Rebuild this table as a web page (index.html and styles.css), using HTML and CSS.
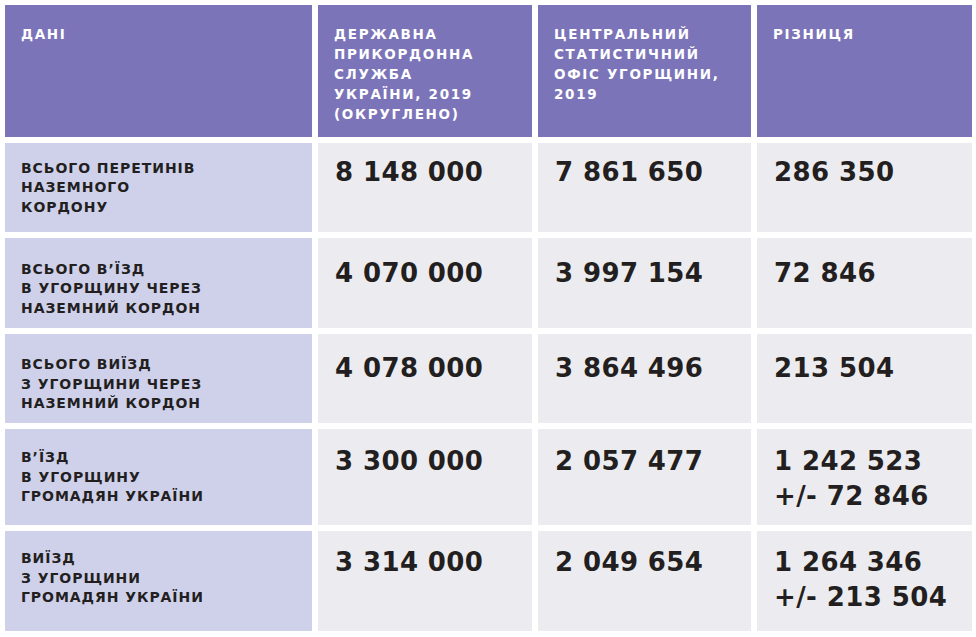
FILE: index.html
```html
<!DOCTYPE html>
<html lang="uk">
<head>
<meta charset="utf-8">
<title>Перетини кордону</title>
<link rel="stylesheet" href="styles.css">
</head>
<body>
<div class="table">
  <div class="row row-head">
    <div class="cell head">ДАНІ</div>
    <div class="cell head">ДЕРЖАВНА<br>ПРИКОРДОННА<br>СЛУЖБА<br>УКРАЇНИ, 2019<br>(ОКРУГЛЕНО)</div>
    <div class="cell head">ЦЕНТРАЛЬНИЙ<br>СТАТИСТИЧНИЙ<br>ОФІС УГОРЩИНИ,<br>2019</div>
    <div class="cell head">РІЗНИЦЯ</div>
  </div>
  <div class="row r1">
    <div class="cell label">ВСЬОГО ПЕРЕТИНІВ<br>НАЗЕМНОГО<br>КОРДОНУ</div>
    <div class="cell num">8 148 000</div>
    <div class="cell num">7 861 650</div>
    <div class="cell num">286 350</div>
  </div>
  <div class="row r2">
    <div class="cell label">ВСЬОГО В’ЇЗД<br>В УГОРЩИНУ ЧЕРЕЗ<br>НАЗЕМНИЙ КОРДОН</div>
    <div class="cell num">4 070 000</div>
    <div class="cell num">3 997 154</div>
    <div class="cell num">72 846</div>
  </div>
  <div class="row r3">
    <div class="cell label">ВСЬОГО ВИЇЗД<br>З УГОРЩИНИ ЧЕРЕЗ<br>НАЗЕМНИЙ КОРДОН</div>
    <div class="cell num">4 078 000</div>
    <div class="cell num">3 864 496</div>
    <div class="cell num">213 504</div>
  </div>
  <div class="row r4">
    <div class="cell label">В’ЇЗД<br>В УГОРЩИНУ<br>ГРОМАДЯН УКРАЇНИ</div>
    <div class="cell num">3 300 000</div>
    <div class="cell num">2 057 477</div>
    <div class="cell num">1 242 523<br>+/- 72 846</div>
  </div>
  <div class="row r5">
    <div class="cell label">ВИЇЗД<br>З УГОРЩИНИ<br>ГРОМАДЯН УКРАЇНИ</div>
    <div class="cell num">3 314 000</div>
    <div class="cell num">2 049 654</div>
    <div class="cell num">1 264 346<br>+/- 213 504</div>
  </div>
</div>
</body>
</html>
```
FILE: styles.css
```css
html, body {
  margin: 0;
  background: #ffffff;
}
body {
  padding: 5px 4px 0 5px;
  font-family: "DejaVu Sans", "Liberation Sans", sans-serif;
  font-weight: 700;
}
.table {
  display: grid;
  grid-template-columns: 307px 214px 213px 215px;
  grid-template-rows: 132px 89px 90px 89px 96px 100px;
  gap: 6px;
}
.row {
  display: contents;
}
.row-head { --pt: 18.5px; }
.r1 { --pt: 15.5px; }
.r2 { --pt: 21.5px; }
.r3 { --pt: 21px; }
.r4 { --pt: 19px; }
.r5 { --pt: 18px; }
.cell {
  padding: var(--pt) 4px 0 16px;
  box-sizing: border-box;
  overflow: hidden;
  white-space: nowrap;
}
.head {
  background: #7c74b8;
  color: #ffffff;
  font-size: 13.5px;
  line-height: 20px;
  letter-spacing: 1.7px;
}
.label {
  background: #cfd1eb;
  color: #231f20;
  font-size: 14px;
  line-height: 19.5px;
  letter-spacing: 0.95px;
}
.num {
  background: #ececf0;
  color: #231f20;
  font-size: 26px;
  line-height: 35px;
  letter-spacing: 0.4px;
  padding-top: calc(var(--pt) - 4px);
  padding-left: 17px;
}
```
